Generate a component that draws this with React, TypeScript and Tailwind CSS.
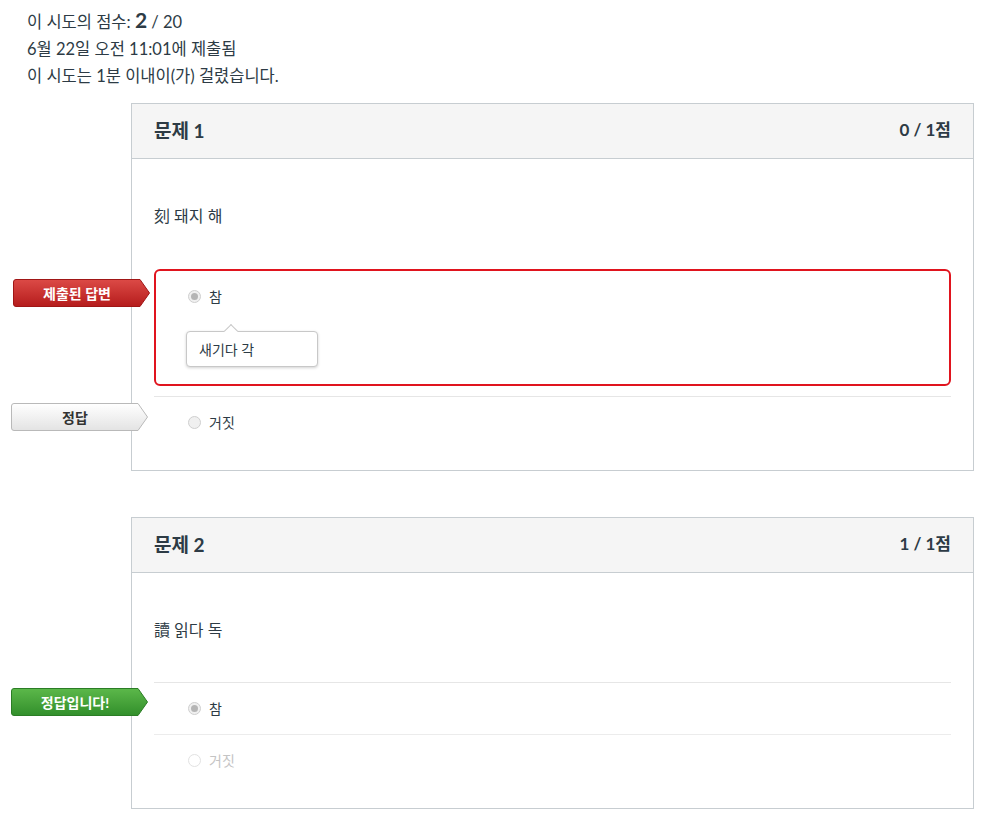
import type { ReactNode } from 'react';

type LabelTone = 'red' | 'gray' | 'green';

// 왼쪽 화살표 라벨
const AnswerLabel = ({ tone, children }: { tone: LabelTone; children: ReactNode }) => {
  const fills: Record<LabelTone, [string, string, string]> = {
    red: ['#dc4a46', '#b51c1c', '#a01616'],
    gray: ['#ffffff', '#e3e3e3', '#b9b9b9'],
    green: ['#5cb84a', '#328f2b', '#2b7d25'],
  };
  const [top, bottom, stroke] = fills[tone];
  const id = `lbl-${tone}`;
  return (
    <div className="relative w-[137px] h-[28px]">
      <svg width="137" height="28" viewBox="0 0 137 28" className="absolute inset-0">
        <defs>
          <linearGradient id={id} x1="0" y1="0" x2="0" y2="1">
            <stop offset="0" stopColor={top} />
            <stop offset="1" stopColor={bottom} />
          </linearGradient>
        </defs>
        <path
          d="M3 0.5 H127 L136.5 14 L127 27.5 H3 Q0.5 27.5 0.5 25 V3 Q0.5 0.5 3 0.5 Z"
          fill={`url(#${id})`}
          stroke={stroke}
          strokeWidth="1"
        />
      </svg>
      <span
        className={`absolute inset-y-0 left-0 w-[128px] flex items-center justify-center text-[14px] font-bold ${
          tone === 'gray' ? 'text-[#333]' : 'text-white'
        }`}
      >
        {children}
      </span>
    </div>
  );
};

const Radio = ({ checked, faded }: { checked?: boolean; faded?: boolean }) => (
  <span
    className={`w-[13px] h-[13px] rounded-full border flex items-center justify-center ${
      faded ? 'border-[#e2e2e2] bg-white' : 'border-[#cfcfcf] bg-[#f0f0f0]'
    }`}
  >
    {checked && <span className="w-[7px] h-[7px] rounded-full bg-[#b5b5b5]" />}
  </span>
);

const Card = ({
  title,
  points,
  question,
  children,
}: {
  title: string;
  points: string;
  question: ReactNode;
  children: ReactNode;
}) => (
  <div className="ml-[131px] w-[843px] border border-[#c7cdd1] bg-white">
    <div className="h-[55px] bg-[#f5f5f5] border-b border-[#c7cdd1] flex justify-between px-[22px]">
      <h2 className="self-center text-[19px] font-bold text-[#2d3b45]">{title}</h2>
      <span className="pt-[13px] text-[17px] font-bold text-[#2d3b45]">{points}</span>
    </div>
    <div className="px-[22px]">
      <p className="pt-[46px] pb-[41px] text-[16px] leading-[22px] text-[#2d3b45]">{question}</p>
      {children}
    </div>
  </div>
);

export default function App() {
  return (
    <div
      className="min-h-[823px] bg-white pb-[14px] text-[#2d3b45]"
      style={{ fontFamily: 'Lato, "Noto Sans CJK KR", sans-serif' }}
    >
      {/* 시도 정보 */}
      <div className="pl-[27px] pt-[9px] text-[16.5px] leading-[27px]">
        <div className="h-[27px]">
          이 시도의 점수: <span className="text-[21px] font-bold leading-none">2</span> / 20
        </div>
        <div>6월 22일 오전 11:01에 제출됨</div>
        <div>이 시도는 1분 이내이(가) 걸렸습니다.</div>
      </div>

      <div className="mt-[13px]">
        <Card title="문제 1" points="0 / 1점" question="刻 돼지 해">
          {/* 제출된 답변 */}
          <div className="relative mt-px mb-[10px] h-[117px] border-2 border-[#e0141e] rounded-[6px] pt-[14px]">
            <div className="absolute left-[-143px] top-[8px] z-10">
              <AnswerLabel tone="red">제출된 답변</AnswerLabel>
            </div>
            <div className="flex items-center h-[22px] pl-[32px] gap-[8px]">
              <Radio checked />
              <span className="text-[14px] text-[#2d3b45]">참</span>
            </div>
            <div className="relative ml-[30px] mt-[24px] w-[132px] h-[36px] rounded-[4px] border border-[#c8c8c8] bg-white shadow-[0_1px_3px_rgba(0,0,0,0.18)] flex items-center pl-[12px] text-[14px] text-[#2d3b45]">
              <span className="absolute left-[39px] top-[-6px] w-[10px] h-[10px] rotate-45 bg-white border-l border-t border-[#c8c8c8]" />
              새기다 각
            </div>
          </div>
          {/* 정답 */}
          <div className="relative h-[52px] border-t border-[#e6e6e6] flex items-center mb-[22px]">
            <div className="absolute left-[-143px] top-[6px] z-10">
              <AnswerLabel tone="gray">정답</AnswerLabel>
            </div>
            <div className="flex items-center pl-[34px] gap-[8px]">
              <Radio />
              <span className="text-[14px] text-[#2d3b45]">거짓</span>
            </div>
          </div>
        </Card>

        <div className="h-[46px]" />

        <Card title="문제 2" points="1 / 1점" question="讀 읽다 독">
          <div className="relative h-[52px] border-t border-[#e6e6e6] flex items-center">
            <div className="absolute left-[-143px] top-[5px] z-10">
              <AnswerLabel tone="green">정답입니다!</AnswerLabel>
            </div>
            <div className="flex items-center pl-[34px] gap-[8px]">
              <Radio checked />
              <span className="text-[14px] text-[#2d3b45]">참</span>
            </div>
          </div>
          <div className="h-[52px] border-t border-[#ececec] flex items-center mb-[22px]">
            <div className="flex items-center pl-[34px] gap-[8px]">
              <Radio faded />
              <span className="text-[14px] text-[#c4c4c4]">거짓</span>
            </div>
          </div>
        </Card>
      </div>
    </div>
  );
}
